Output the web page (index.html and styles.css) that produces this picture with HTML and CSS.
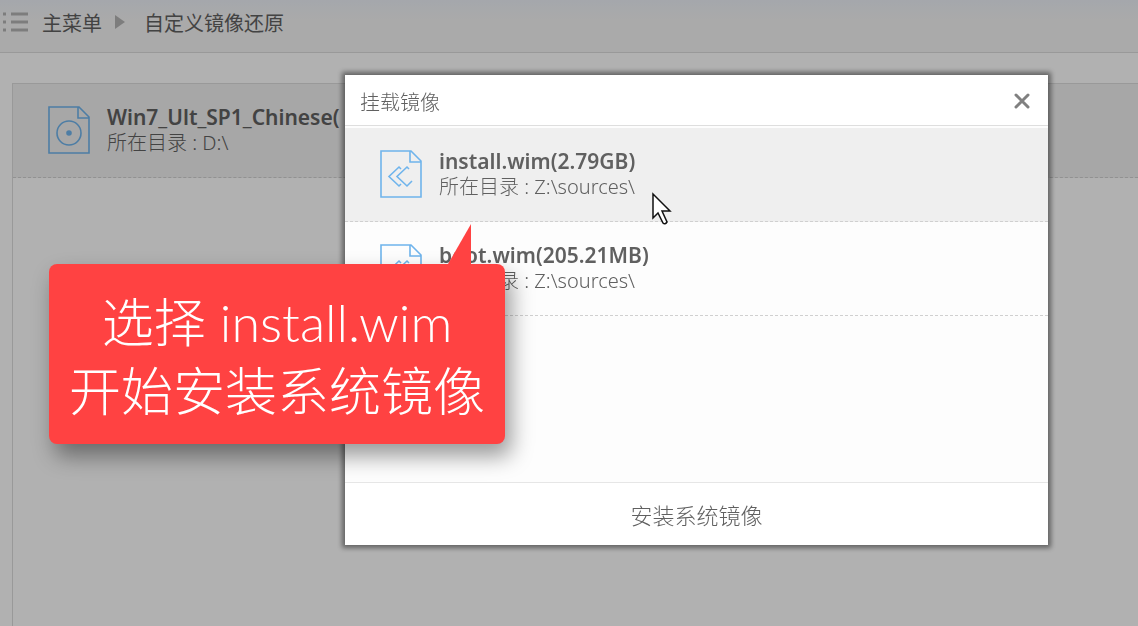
FILE: index.html
```html
<!DOCTYPE html>
<html lang="zh-CN">

<head>
    <meta charset="UTF-8">
    <meta name="viewport" content="width=device-width, initial-scale=1.0">
    <title>自定义镜像还原</title>
    <link rel="stylesheet" href="styles.css">
</head>

<body>
    <div class="page">
        <nav class="topbar">
            <svg class="menu-icon" viewBox="0 0 28 20" aria-hidden="true">
                <path d="M9 2h17M9 10h17M9 18h17M1 2h3M1 10h3M1 18h3" />
            </svg>
            <a href="#">主菜单</a>
            <svg class="arrow-icon" viewBox="0 0 12 16" aria-hidden="true">
                <path d="M1 1l10 7-10 7z" />
            </svg>
            <span>自定义镜像还原</span>
        </nav>
        <main class="images">
            <button class="item selected">
                <svg class="file-icon" viewBox="0 0 42 48" aria-hidden="true">
                    <path d="M1 1h30l10 10v36H1zM30 1v11h11" />
                    <circle cx="21" cy="27" r="12" />
                    <circle class="hub" cx="21" cy="27" r="2" />
                </svg>
                <span class="info">
                    <span class="name">Win7_Ult_SP1_Chinese(</span>
                    <span class="path">所在目录 : D:\</span>
                </span>
            </button>
        </main>
    </div>

    <div class="overlay">
        <section class="dialog" role="dialog" aria-labelledby="dialog-title">
            <header class="dialog-header">
                <h1 id="dialog-title">挂载镜像</h1>
                <button class="close" aria-label="关闭">
                    <svg viewBox="0 0 18 18" aria-hidden="true">
                        <path d="M3 3l12 12M15 3L3 15" />
                    </svg>
                </button>
            </header>
            <div class="list">
                <button class="item selected">
                    <svg class="file-icon" viewBox="0 0 42 48" aria-hidden="true">
                        <path d="M1 1h30l10 10v36H1zM30 1v11h11" />
                        <path d="M21 19l-2-2L9 26.500l10 9.500 2-2M29 19l-2-2-10 9.500 10 9.500 5-5" />
                    </svg>
                    <span class="info">
                        <span class="name">install.wim(2.79GB)</span>
                        <span class="path">所在目录 : Z:\sources\</span>
                    </span>
                </button>
                <button class="item">
                    <svg class="file-icon" viewBox="0 0 42 48" aria-hidden="true">
                        <path d="M1 1h30l10 10v36H1zM30 1v11h11" />
                        <path d="M21 19l-2-2L9 26.500l10 9.500 2-2M29 19l-2-2-10 9.500 10 9.500 5-5" />
                    </svg>
                    <span class="info">
                        <span class="name">boot.wim(205.21MB)</span>
                        <span class="path">所在目录 : Z:\sources\</span>
                    </span>
                </button>
            </div>
            <button class="install">安装系统镜像</button>
        </section>
    </div>

    <div class="callout">
        <svg class="callout-tip" viewBox="0 0 24 40" aria-hidden="true">
            <path d="M23 0v40H0z" />
        </svg>
        选择 install.wim<br>开始安装系统镜像
    </div>

    <svg class="cursor" viewBox="0 0 20 34" aria-hidden="true">
        <path d="M1 2v24l5-5 5 10q2 2 4-1l-5-11h8z" />
    </svg>
</body>

</html>
```
FILE: styles.css
```css
* {
    box-sizing: border-box;
}

body {
    margin: 0;
    font-family: "Noto Sans", "Noto Sans CJK SC", sans-serif;
    font-size: 20px;
    color: #606060;
    background-color: #fefefe;
    overflow: hidden;
}

button {
    font: inherit;
    color: inherit;
    border: none;
    background: none;
    cursor: pointer;
}

svg {
    fill: none;
    flex: none;
}

/* Página de fondo */
.page {
    display: flex;
    flex-direction: column;
    height: 100vh;
}

.topbar {
    display: flex;
    align-items: center;
    height: 53px;
    padding: 0 2px 8px;
    background: linear-gradient(#ecf0f6, #f4f4f4 20px);
    border-bottom: 1px solid #dcdcdc;
}

.topbar a {
    color: inherit;
    text-decoration: none;
}

.menu-icon {
    width: 28px;
    height: 20px;
    margin-right: 12px;
    stroke: #b4b4b4;
    stroke-width: 3px;
}

.arrow-icon {
    width: 12px;
    height: 16px;
    margin: 0 18px 0 12px;
    fill: #b4b4b4;
}

.images {
    flex: 1;
    margin: 30px 0 0 12px;
    border-top: 1px solid #dcdcdc;
    border-left: 1px solid #dcdcdc;
}

/* Filas de archivos */
.item {
    display: flex;
    align-items: flex-start;
    gap: 17px;
    width: 100%;
    height: 94px;
    padding: 22px 35px;
    text-align: left;
    white-space: nowrap;
    border-bottom: 1px dashed #d0d0d0;
}

.item.selected {
    background-color: #efefef;
}

.file-icon {
    width: 42px;
    height: 48px;
    stroke: #6fb4ec;
    stroke-width: 1.6px;
}

.hub {
    fill: #6fb4ec;
}

.info {
    display: flex;
    flex-direction: column;
    line-height: 26px;
    margin-top: -2px;
}

.name {
    font-size: 21px;
    font-weight: 600;
}

.path {
    font-size: 20px;
    font-weight: 300;
}

/* Ventana */
.overlay {
    position: fixed;
    inset: 0;
    display: flex;
    padding: 75px 90px 81px 345px;
    background-color: rgba(0, 0, 0, 0.3);
}

.dialog {
    flex: 1;
    display: flex;
    flex-direction: column;
    background-color: #fff;
    box-shadow: 0 0 5px 3px rgba(0, 0, 0, 0.45);
}

.dialog-header {
    display: flex;
    align-items: center;
    justify-content: space-between;
    height: 51px;
    padding: 2px 11px 0 15px;
    border-bottom: 1px solid #dedede;
}

.dialog-header h1 {
    margin: 0;
    font-size: 20px;
    font-weight: 300;
}

.close {
    padding: 6px;
}

.close svg {
    display: block;
    width: 18px;
    height: 18px;
    stroke: #808080;
    stroke-width: 3px;
    stroke-linecap: round;
}

.list {
    flex: 1;
    padding-top: 2px;
    background-color: #fdfdfd;
}

.install {
    height: 63px;
    font-size: 22px;
    font-weight: 300;
    border-top: 1px solid #e6e6e6;
}

/* Globo rojo */
.callout {
    position: absolute;
    left: 49px;
    top: 264px;
    padding: 24px 20px 18px;
    font-family: Lato, "Noto Sans CJK SC", sans-serif;
    font-size: 52px;
    font-weight: 300;
    line-height: 69px;
    text-align: center;
    white-space: nowrap;
    color: #fff;
    background-color: #ff4242;
    border-radius: 8px;
    box-shadow: 6px 12px 22px rgba(0, 0, 0, 0.4);
}

.callout-tip {
    position: absolute;
    right: 33px;
    bottom: 100%;
    width: 24px;
    height: 40px;
    fill: #ff4242;
}

.cursor {
    position: absolute;
    left: 652px;
    top: 192px;
    width: 20px;
    height: 34px;
    fill: #fff;
    stroke: #111;
    stroke-width: 1.5px;
}
```
